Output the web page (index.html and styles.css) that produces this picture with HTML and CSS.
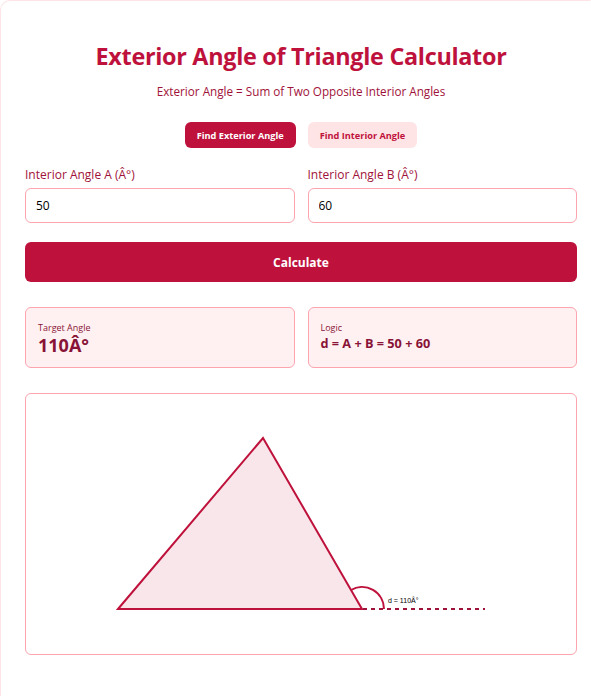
FILE: index.html
```html
<!DOCTYPE html>
<html>
<head>
<meta charset="utf-8">
<link rel="stylesheet" href="styles.css">
</head>
<body>
<div class="card">
  <h1 class="title">Exterior Angle of Triangle Calculator</h1>
  <p class="subtitle">Exterior Angle = Sum of Two Opposite Interior Angles</p>
  <div class="tabs">
    <button class="tab active">Find Exterior Angle</button>
    <button class="tab">Find Interior Angle</button>
  </div>
  <div class="fields">
    <div class="field">
      <label class="label">Interior Angle A (Â°)</label>
      <input class="input" type="number" value="50">
    </div>
    <div class="field">
      <label class="label">Interior Angle B (Â°)</label>
      <input class="input" type="number" value="60">
    </div>
  </div>
  <button class="calc">Calculate</button>
  <div class="results">
    <div class="result">
      <div class="r-label">Target Angle</div>
      <div class="r-value big">110Â°</div>
    </div>
    <div class="result">
      <div class="r-label">Logic</div>
      <div class="r-value">d = A + B = 50 + 60</div>
    </div>
  </div>
  <div class="canvas">
    <svg class="diagram" width="550" height="260" viewBox="0 0 550 260">
      <polygon points="92,215 237,44 336,215" fill="#f9e6ea" stroke="#be123c" stroke-width="2" stroke-linejoin="miter"/>
      <line x1="337" y1="215" x2="459" y2="215" stroke="#9f1239" stroke-width="2" stroke-dasharray="4 4"/>
      <path d="M358 215 A22 22 0 0 0 325 196" fill="none" stroke="#be123c" stroke-width="2"/>
      <text x="362" y="209" class="d-text">d = 110Â°</text>
    </svg>
  </div>
</div>
</body>
</html>
```
FILE: styles.css
```css
html, body {
  margin: 0;
  padding: 0;
  background: #ffffff;
}
body {
  font-family: "Open Sans", "Noto Sans", sans-serif;
}
.card {
  box-sizing: border-box;
  width: 100%;
  margin: 0;
  padding: 39px 13px 40px 24px;
  border: 1px solid #fde4e6;
  border-right-color: transparent;
  border-radius: 10px 0 0 10px;
  min-height: 720px;
}
.title {
  margin: 0;
  text-align: center;
  color: #be123c;
  font-size: 23.4px;
  line-height: 32px;
  font-weight: 700;
  letter-spacing: -0.3px;
}
.subtitle {
  margin: 10px 0 0;
  text-align: center;
  color: #9f1239;
  font-size: 11.7px;
  line-height: 18px;
}
.tabs {
  display: flex;
  justify-content: center;
  gap: 12px;
  margin-top: 22px;
}
.tab {
  font-family: inherit;
  border: none;
  border-radius: 6px;
  height: 26px;
  padding: 0 12px;
  font-size: 9.2px;
  font-weight: 700;
  background: #ffe4e6;
  color: #be123c;
}
.tab.active {
  background: #be123c;
  color: #ffffff;
}
.fields {
  display: grid;
  grid-template-columns: 1fr 1fr;
  gap: 13px;
  margin-top: 18px;
}
.field {
  display: flex;
  flex-direction: column;
  gap: 4px;
}
.label {
  color: #9f1239;
  font-size: 12px;
  line-height: 18px;
}
.input {
  box-sizing: border-box;
  height: 35px;
  width: 100%;
  border: 1px solid #fda4af;
  border-radius: 6px;
  padding: 0 10px;
  font-family: inherit;
  font-size: 12px;
  color: #000;
  background: #fff;
}
.calc {
  display: block;
  width: 100%;
  height: 40px;
  margin-top: 19px;
  border: none;
  border-radius: 6px;
  background: #be123c;
  color: #fff;
  font-family: inherit;
  font-size: 12px;
  font-weight: 700;
}
.results {
  display: grid;
  grid-template-columns: 1fr 1fr;
  gap: 13px;
  margin-top: 25px;
}
.result {
  box-sizing: border-box;
  height: 61px;
  background: #fff1f2;
  border: 1px solid #fda4af;
  border-radius: 6px;
  padding: 13px 12px;
}
.r-label {
  color: #881337;
  font-size: 9px;
  line-height: 13px;
}
.r-value {
  color: #881337;
  font-size: 12.7px;
  font-weight: 700;
  line-height: 18px;
}
.r-value.big {
  font-size: 18px;
  line-height: 22px;
}
.canvas {
  box-sizing: border-box;
  height: 262px;
  margin-top: 25px;
  border: 1px solid #fda4af;
  border-radius: 6px;
  background: #fff;
}
.diagram {
  display: block;
}
.d-text {
  font-family: "Liberation Sans", sans-serif;
  font-size: 7px;
  fill: #000;
}
```
